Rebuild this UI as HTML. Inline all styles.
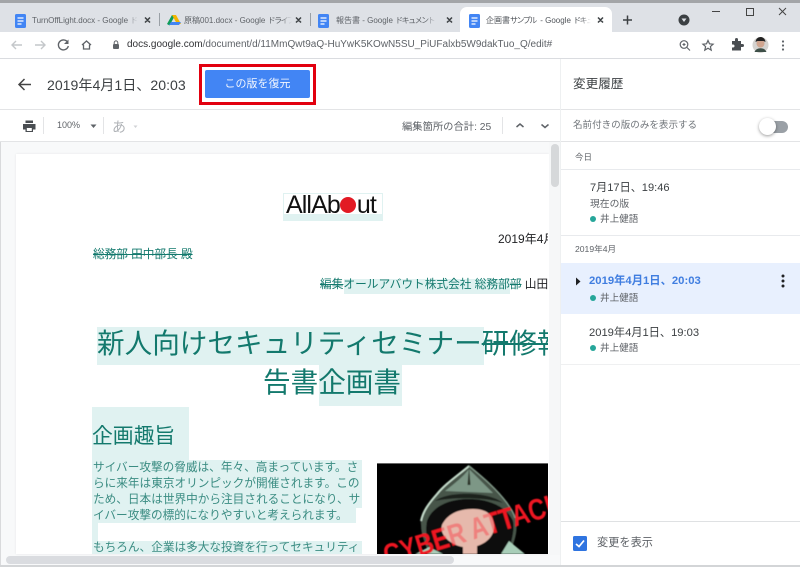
<!DOCTYPE html>
<html lang="ja"><head><meta charset="utf-8"><style>
html,body{margin:0;padding:0;width:800px;height:567px;overflow:hidden;background:#fff}
body{position:relative;font-family:"Liberation Sans","Noto Sans CJK JP",sans-serif;color:#3c4043}
.a{position:absolute;white-space:nowrap}
.hl{background:#e0f2f1}
.t{color:#13796d}
.tab{font-size:8px;top:14px;color:#5f6368;line-height:13px;overflow:hidden;-webkit-mask-image:linear-gradient(to right,#000 90%,transparent);mask-image:linear-gradient(to right,#000 90%,transparent)}
.k{letter-spacing:-1.500px}
</style></head><body>
<!-- chrome -->
<div class="a" style="left:0;top:0;width:800px;height:3px;background:#a3a5a8"></div>
<div class="a" style="left:0;top:3px;width:800px;height:29px;background:#dee1e6"></div>
<div class="a" style="left:460px;top:7px;width:152px;height:25px;background:#fff;border-radius:7px 7px 0 0"></div>
<svg class="a" style="left:0;top:0" width="800" height="58">
<rect x="15" y="14" width="11" height="14" rx="1.500" fill="#4285f4"/><path d="M17.500 18h6M17.500 21h6M17.500 24h4" stroke="#fff" stroke-width="1.200"/>
<rect x="318" y="14" width="11" height="14" rx="1.500" fill="#4285f4"/><path d="M320.500 18h6M320.500 21h6M320.500 24h4" stroke="#fff" stroke-width="1.200"/>
<rect x="469" y="14" width="11" height="14" rx="1.500" fill="#4285f4"/><path d="M471.500 18h6M471.500 21h6M471.500 24h4" stroke="#fff" stroke-width="1.200"/>
<path d="M172 15l-5 9 2.500 1.500 5-9z" fill="#0f9d58"/><path d="M172 15h4l5 9h-4z" fill="#f4b400"/><path d="M169 25l2-3h10l-2 3z" fill="#4285f4"/>
<path d="M159.500 13v13M310.500 13v13" stroke="#9aa0a6"/>
<path d="M145 17.500l5 5M150 17.500l-5 5M296 17.500l5 5M301 17.500l-5 5M447 17.500l5 5M452 17.500l-5 5M598 17.500l5 5M603 17.500l-5 5" stroke="#3c4043" stroke-width="1.500"/>
<path d="M623 20h9M627.500 15.500v9" stroke="#3c4043" stroke-width="1.500"/>
<circle cx="684" cy="20" r="5.500" fill="#3c4043"/><path d="M681.500 18.500h5l-2.500 3.500z" fill="#dee1e6"/>
<path d="M712 11.500h8" stroke="#444"/><rect x="746.500" y="8.500" width="7" height="7" fill="none" stroke="#444"/><path d="M779 8l7 7M786 8l-7 7" stroke="#444"/>
<path d="M22 45h-10M16 41l-4 4 4 4" fill="none" stroke="#c4c7ca" stroke-width="1.400"/>
<path d="M35 45h10M41 41l4 4-4 4" fill="none" stroke="#c4c7ca" stroke-width="1.400"/>
<path d="M67.500 42a5 5 0 1 0 .8 4" fill="none" stroke="#5f6368" stroke-width="1.400"/><path d="M68.500 39.500v4.500h-4.500z" fill="#5f6368"/>
<path d="M82 45l4.500-4 4.500 4M83.500 44.500v4.500h6v-4.500" fill="none" stroke="#5f6368" stroke-width="1.300"/>
<rect x="113" y="44" width="6" height="5" rx="1" fill="#5f6368"/><path d="M114.200 44v-1.300a1.800 1.800 0 0 1 3.600 0v1.300" fill="none" stroke="#5f6368"/>
</svg>
<div class="a" style="left:0;top:32px;width:800px;height:26px;background:#fff;z-index:-1"></div>
<div class="a" style="left:103px;top:35px;width:618px;height:20px;border-radius:10px;background:#f1f3f4;z-index:-1"></div>
<div class="a" style="left:0;top:58px;width:800px;height:1px;background:#dadce0"></div>
<div class="a tab" style="left:32px;width:106px">TurnOffLight.docx - Google ド</div>
<div class="a tab" style="left:184px;width:108px">原稿001.docx - Google <span class="k">ドライブ</span></div>
<div class="a tab" style="left:336px;width:100px">報告書 - Google <span class="k">ドキュメント</span></div>
<div class="a tab" style="left:486px;width:105px;color:#50545a">企画書<span class="k">サンプル</span> &nbsp;- Google <span class="k">ドキュメ</span></div>
<div class="a" style="left:127px;top:38px;font-size:10px;line-height:14px;color:#5f6368"><span style="color:#303134">docs.google.com</span>/document/d/11MmQwt9aQ-HuYwK5KOwN5SU_PiUFalxb5W9dakTuo_Q/edit#</div>
<svg class="a" style="left:670px;top:34px" width="130" height="24">
<circle cx="14" cy="10.500" r="3.800" fill="none" stroke="#5f6368" stroke-width="1.200"/><path d="M17 13.500l3 3M12.500 10.500h3M14 9v3" stroke="#5f6368" stroke-width="1.100"/>
<path d="M38 6.500l1.500 3.300 3.600.4-2.700 2.400.8 3.500-3.200-1.900-3.200 1.900.8-3.500-2.700-2.400 3.600-.4z" fill="none" stroke="#5f6368" stroke-width="1.200"/>
<path d="M62 8h3v-1.500a1.500 1.500 0 0 1 3 0v1.500h3v3h1.500a1.500 1.500 0 0 1 0 3h-1.500v3.500h-9v-3h1a1.500 1.500 0 0 0 0-3h-1z" fill="#4a4e52" transform="translate(0 -1)"/>
<circle cx="90.500" cy="11" r="8" fill="#d4d2cf"/><circle cx="90.500" cy="9.500" r="4" fill="#d0a58f"/><path d="M85.500 8a5 5 0 0 1 10 0l-2-1h-6z" fill="#222"/><path d="M84.500 18a6.500 6 0 0 1 12 0z" fill="#3d4f48"/>
<circle cx="113" cy="7.500" r="1.100" fill="#5f6368"/><circle cx="113" cy="11.500" r="1.100" fill="#5f6368"/><circle cx="113" cy="15.500" r="1.100" fill="#5f6368"/>
</svg>
<!-- header -->
<svg class="a" style="left:16px;top:76px" width="18" height="18"><path d="M15 8.500H3M8.500 3 3 8.500 8.500 14" fill="none" stroke="#444" stroke-width="1.500"/></svg>
<div class="a" style="left:47px;top:76px;font-size:14.100px;line-height:18px;color:#3c4043">2019年4月1日、20:03</div>
<div class="a" style="left:199px;top:64px;width:111px;height:35px;border:3px solid #e2000f"></div>
<div class="a" style="left:205px;top:70px;width:105px;height:28px;background:#4285f4;border-radius:2px;color:#f2f6fe;font-size:11px;line-height:29px;text-align:center">この版を復元</div>
<div class="a" style="left:0;top:109px;width:560px;height:1px;background:#e3e4e6"></div>
<!-- doc toolbar -->
<svg class="a" style="left:21px;top:118px" width="16" height="16"><path d="M2 6h12.500v5.500h-2.500v2.500H4.500v-2.500H2z" fill="#4a4e52"/><rect x="4.500" y="2.500" width="7.500" height="2.500" fill="#4a4e52"/><rect x="5.800" y="10" width="5" height="3" fill="#fff"/></svg>
<div class="a" style="left:43px;top:117px;width:1px;height:17px;background:#e3e4e6"></div>
<div class="a" style="left:57px;top:119px;font-size:9px;line-height:13px;color:#5f6368">100%</div>
<svg class="a" style="left:90px;top:124px" width="8" height="5"><path d="M.5 .5h6L3.500 4z" fill="#5f6368"/></svg>
<div class="a" style="left:103px;top:117px;width:1px;height:17px;background:#e3e4e6"></div>
<div class="a" style="left:112px;top:118px;font-size:14px;line-height:18px;color:#b0b3b7">あ</div>
<svg class="a" style="left:133px;top:125px" width="7" height="4"><path d="M.5 .5h4L2.500 3z" fill="#d0d2d5"/></svg>
<div class="a" style="left:402px;top:121px;font-size:10.300px;line-height:14px;color:#5f6368">編集箇所の合計: 25</div>
<div class="a" style="left:502px;top:117px;width:1px;height:17px;background:#e3e4e6"></div>
<svg class="a" style="left:514px;top:121px" width="38" height="10"><path d="M2.500 6l3.500-3 3.500 3M27.500 3.500l3.500 3 3.500-3" fill="none" stroke="#5f6368" stroke-width="1.500"/></svg>
<div class="a" style="left:0;top:141px;width:560px;height:1px;background:#e3e4e6"></div>
<!-- doc area -->
<div class="a" style="left:0;top:142px;width:560px;height:424px;background:#f8f9fa;overflow:hidden">
 <div class="a" style="left:0;top:0;width:1px;height:424px;background:#d9dadc"></div>
 <div class="a" style="left:16px;top:12px;width:533px;height:400px;background:#fff;box-shadow:0 0 2px rgba(60,64,67,.1)"></div>
</div>
<div class="a" style="left:549px;top:142px;width:11px;height:413px;background:#f6f7f8"></div>
<div class="a" style="left:551px;top:144px;width:8px;height:43px;background:#d6d8da;border-radius:4px"></div>
<div class="a" style="left:6px;top:556px;width:448px;height:8px;background:#dadce0;border-radius:4px"></div>
<div class="a" style="left:0;top:565px;width:800px;height:2px;background:#d3d5d7"></div>
<!-- page content -->
<div class="a" style="left:16px;top:154px;width:532px;height:400px;overflow:hidden">
 <div class="a hl" style="left:267px;top:39px;width:100px;height:27.500px"></div>
 <div class="a" style="left:268px;top:40px;width:98px;height:20px;background:#fff"></div>
 <div class="a" style="left:270px;top:36px;font-size:25px;line-height:30px;color:#111;letter-spacing:-.9px">AllAb<span style="display:inline-block;width:16.500px;height:16.500px;border-radius:50%;background:#e21a24;vertical-align:0;margin:0 .5px 0 0"></span>ut</div>
 <div class="a" style="left:482px;top:77px;font-size:12px;line-height:16px;color:#202124">2019年4月</div>
 <div class="a t" style="left:77px;top:93px;font-size:11.650px;line-height:16px;text-decoration:line-through">総務部 田中部長 殿</div>
 <div class="a hl" style="left:328px;top:125px;width:166px;height:15px"></div>
 <div class="a t" style="left:304px;top:123px;font-size:11.700px;line-height:16px"><span style="text-decoration:line-through">編集</span>オールアバウト株式会社 総務部<span style="text-decoration:line-through">部</span> <span style="color:#202124">山田</span></div>
 <div class="a hl" style="left:81px;top:173px;width:387px;height:38px"></div>
 <div class="a t" style="left:81px;top:170px;font-size:27.600px;line-height:40px">新人向けセキュリティセミナー<span style="text-decoration:line-through">研修報</span></div>
 <div class="a hl" style="left:303px;top:211px;width:83px;height:41px"></div>
 <div class="a t" style="left:247px;top:209px;font-size:27.600px;line-height:40px">告書企画書</div>
 <div class="a hl" style="left:76px;top:253px;width:97px;height:53px"></div>
 <div class="a t" style="left:76px;top:269px;font-size:20.800px;line-height:28px">企画趣旨</div>
 <div class="a hl" style="left:76px;top:306px;width:270px;height:48px"></div>
 <div class="a hl" style="left:76px;top:354px;width:264px;height:15px"></div>
 <div class="a hl" style="left:76px;top:369px;width:6px;height:18px"></div>
 <div class="a hl" style="left:76px;top:387px;width:270px;height:16px"></div>
 <div class="a" style="left:77px;top:306px;font-size:11.650px;line-height:16px;color:#3a8c82">サイバー攻撃の脅威は、年々、高まっています。さ<br>らに来年は東京オリンピックが開催されます。この<br>ため、日本は世界中から注目されることになり、サ<br>イバー攻撃の標的になりやすいと考えられます。<br><br>もちろん、企業は多大な投資を行ってセキュリティ</div>
 <svg class="a" style="left:361px;top:309px" width="171" height="91" viewBox="0 0 171 91">
  <defs><filter id="b"><feGaussianBlur stdDeviation=".5"/></filter></defs>
  <rect width="171" height="91" fill="#000"/>
  <rect width="171" height="1" fill="#666"/>
  <g filter="url(#b)">
  <path d="M92 2C80 12 68 20 60 30 50 42 42 50 44 62 44 72 48 80 52 91H132C138 78 142 66 138 54 130 36 112 18 92 2Z" fill="#46554a"/>
  <path d="M92 3C80 13 68 21 60 31 52 40 46 48 44 58" fill="none" stroke="#c5dccb" stroke-width="2"/>
  <path d="M92 3C104 13 118 24 130 40 134 46 137 50 138 55" fill="none" stroke="#7f9686" stroke-width="1.500"/>
  <path d="M92 6C86 14 78 20 68 28L116 30C108 22 100 14 92 6Z" fill="#7d9786"/>
  <path d="M92 4 90.500 22 93.500 22Z" fill="#2c3227"/>
  <path d="M58 38C70 28 112 28 126 40 110 34 74 34 58 38Z" fill="#1d241e"/>
  <path d="M50 58C56 42 74 36 92 36 112 36 130 44 136 58 138 68 134 80 130 91H54C50 80 48 68 50 58Z" fill="#070907"/>
  <path d="M38 91 52 84 66 91ZM124 91 132 78 148 91Z" fill="#a8cdb8"/>
  <path d="M65 62C70 52 80 46 96 46 110 46 116 52 117 62 118 72 110 80 100 83V91H86V84C74 82 62 72 65 62Z" fill="#d9a898"/>
  <text transform="translate(10 103) rotate(-17)" font-family="Liberation Sans" font-weight="700" font-size="30" fill="#ee1520" textLength="186" lengthAdjust="spacingAndGlyphs">CYBER ATTACK</text>
  <path d="M65 62C70 52 80 46 96 46 110 46 116 52 117 62 118 72 110 80 100 83V91H86V84C74 82 62 72 65 62Z" fill="#edc3b8" opacity=".62"/>
  </g>
 </svg>
</div>
<!-- sidebar -->
<div class="a" style="left:560px;top:59px;width:240px;height:506px;background:#fff;border-left:1px solid #eef0f1;box-sizing:border-box"></div>
<div class="a" style="left:573px;top:75px;font-size:12.600px;line-height:18px;color:#3c4043">変更履歴</div>
<div class="a" style="left:561px;top:109px;width:239px;height:1px;background:#e3e4e6"></div>
<div class="a" style="left:573px;top:119px;font-size:9.550px;line-height:14px;color:#70757a">名前付きの版のみを表示する</div>
<div class="a" style="left:762px;top:121px;width:26px;height:12px;border-radius:6px;background:#9aa0a6"></div>
<div class="a" style="left:759px;top:118px;width:17px;height:17px;border-radius:50%;background:#fff;box-shadow:0 1px 3px rgba(0,0,0,.4)"></div>
<div class="a" style="left:561px;top:141px;width:239px;height:1px;background:#e3e4e6"></div>
<div class="a" style="left:575px;top:151px;font-size:8.500px;line-height:12px;color:#5f6368">今日</div>
<div class="a" style="left:561px;top:169px;width:239px;height:1px;background:#e8eaed"></div>
<div class="a" style="left:590px;top:181px;font-size:11.100px;line-height:15px;color:#3c4043">7月17日、19:46</div>
<div class="a" style="left:590px;top:198px;font-size:9.800px;line-height:14px;color:#5f6368">現在の版</div>
<div class="a" style="left:590px;top:216px;width:6px;height:6px;border-radius:50%;background:#26a69a"></div>
<div class="a" style="left:600px;top:213px;font-size:9.600px;line-height:14px;color:#5f6368">井上健語</div>
<div class="a" style="left:561px;top:235px;width:239px;height:1px;background:#e8eaed"></div>
<div class="a" style="left:575px;top:243px;font-size:8.600px;line-height:12px;color:#5f6368">2019年4月</div>
<div class="a" style="left:561px;top:263px;width:239px;height:51px;background:#e8f0fe"></div>
<svg class="a" style="left:575px;top:277px" width="7" height="9"><path d="M1 .5 5.500 4.500 1 8.500z" fill="#202124"/></svg>
<div class="a" style="left:589px;top:274px;font-size:11.300px;line-height:15px;font-weight:700;color:#3f7de0">2019年4月1日、20:03</div>
<div class="a" style="left:590px;top:295px;width:6px;height:6px;border-radius:50%;background:#26a69a"></div>
<div class="a" style="left:600px;top:292px;font-size:9.600px;line-height:14px;color:#5f6368">井上健語</div>
<svg class="a" style="left:780px;top:273px" width="6" height="16"><circle cx="3" cy="3" r="1.500" fill="#202124"/><circle cx="3" cy="8" r="1.500" fill="#202124"/><circle cx="3" cy="13" r="1.500" fill="#202124"/></svg>
<div class="a" style="left:589px;top:326px;font-size:11.200px;line-height:15px;color:#3c4043">2019年4月1日、19:03</div>
<div class="a" style="left:590px;top:345px;width:6px;height:6px;border-radius:50%;background:#26a69a"></div>
<div class="a" style="left:600px;top:342px;font-size:9.600px;line-height:14px;color:#5f6368">井上健語</div>
<div class="a" style="left:561px;top:364px;width:239px;height:1px;background:#eff0f1"></div>
<div class="a" style="left:561px;top:521px;width:239px;height:1px;background:#dfe1e3"></div>
<div class="a" style="left:573px;top:536px;width:14px;height:15px;background:#2f74e0;border-radius:1.500px"></div>
<svg class="a" style="left:573px;top:536px" width="14" height="15"><path d="M3 8 6 10.500 11 4.500" fill="none" stroke="#fff" stroke-width="1.700"/></svg>
<div class="a" style="left:597px;top:535px;font-size:11.200px;line-height:16px;color:#5f6368">変更を表示</div>
</body></html>
